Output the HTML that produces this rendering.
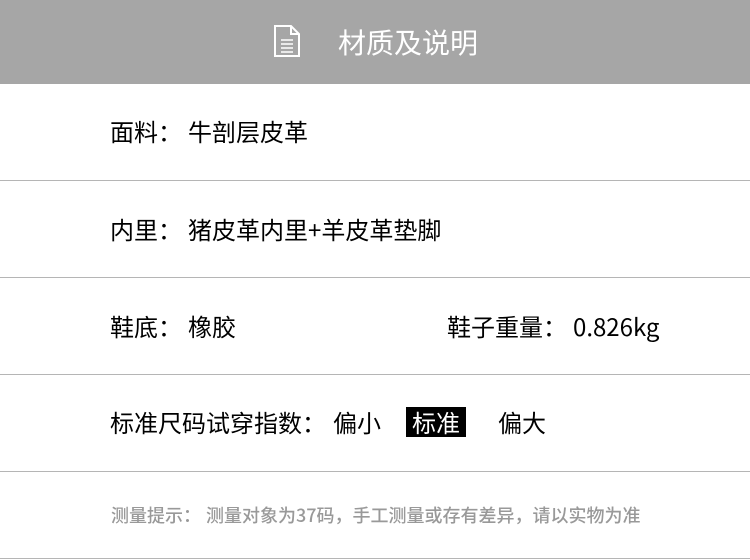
<!DOCTYPE html>
<html><head><meta charset="utf-8"><style>
body{margin:0;width:750px;height:560px;background:#fff;font-family:"Noto Sans CJK SC","Liberation Sans",sans-serif;position:relative;overflow:hidden}
.hd{position:absolute;left:0;top:0;width:750px;height:84px;background:#a6a6a6}
.ht{position:absolute;left:338px;top:24px;font-size:28px;color:#fff;line-height:36px;white-space:nowrap}
.t{position:absolute;font-size:24px;color:#000;line-height:30px;white-space:nowrap}
.ln{position:absolute;left:0;width:750px;height:1px;background:#b5b5b5}
.box{background:#000;color:#fff;padding:0 6px;display:inline-block;line-height:30px}
.hint{position:absolute;left:111px;top:503px;font-size:18px;color:#999;line-height:24px;white-space:nowrap;font-weight:500}
.sp{display:inline-block}
</style></head><body>
<div class="hd">
<svg style="position:absolute;left:273px;top:24px" width="28" height="34" viewBox="0 0 28 34" fill="none" stroke="#fff" stroke-width="2">
<path d="M2 2H18L26 10V32H2Z"/><path d="M18 2V10H26"/>
<path d="M8 16H20M8 20H20M8 24H20M8 28H20" stroke-width="1.5"/>
</svg>
<div class="ht">材质及说明</div>
</div>
<div class="t" style="left:110px;top:116px">面料：<span class="sp" style="width:6px"></span>牛剖层皮革</div>
<div class="ln" style="top:180px"></div>
<div class="t" style="left:110px;top:214px">内里：<span class="sp" style="width:6px"></span>猪皮革内里+羊皮革垫脚</div>
<div class="ln" style="top:277px"></div>
<div class="t" style="left:110px;top:311px">鞋底：<span class="sp" style="width:6px"></span>橡胶</div>
<div class="t" style="left:447px;top:311px">鞋子重量：<span class="sp" style="width:6px"></span>0.826kg</div>
<div class="ln" style="top:374px"></div>
<div class="t" style="left:110px;top:407px">标准尺码试穿指数：<span class="sp" style="width:7px"></span>偏小</div>
<div class="t" style="left:406px;top:407px"><span class="box">标准</span></div>
<div class="t" style="left:498px;top:407px">偏大</div>
<div class="ln" style="top:471px"></div>
<div class="hint">测量提示：<span class="sp" style="width:5px"></span>测量对象为37码，手工测量或存有差异，请以实物为准</div>
<div class="ln" style="top:558px"></div>
</body></html>
